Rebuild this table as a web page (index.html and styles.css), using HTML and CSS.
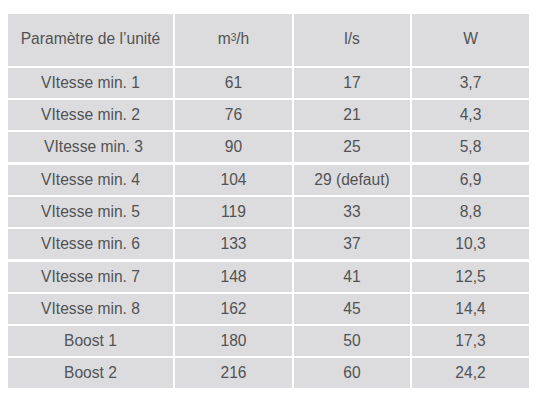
FILE: index.html
```html
<!DOCTYPE html>
<html lang="fr">
<head>
<meta charset="utf-8">
<title>Paramètre de l'unité</title>
<link rel="stylesheet" href="styles.css">
</head>
<body>
<div class="page">
  <div class="grid">
    <div class="cell head">Paramètre de l’unité</div>
    <div class="cell head">m<sup>3</sup>/h</div>
    <div class="cell head">l/s</div>
    <div class="cell head">W</div>

    <div class="cell">VItesse min. 1</div><div class="cell">61</div><div class="cell">17</div><div class="cell">3,7</div>
    <div class="cell">VItesse min. 2</div><div class="cell">76</div><div class="cell">21</div><div class="cell">4,3</div>
    <div class="cell shifted">VItesse min. 3</div><div class="cell">90</div><div class="cell">25</div><div class="cell">5,8</div>
    <div class="cell">VItesse min. 4</div><div class="cell">104</div><div class="cell">29 (defaut)</div><div class="cell">6,9</div>
    <div class="cell">VItesse min. 5</div><div class="cell">119</div><div class="cell">33</div><div class="cell">8,8</div>
    <div class="cell">VItesse min. 6</div><div class="cell">133</div><div class="cell">37</div><div class="cell">10,3</div>
    <div class="cell">VItesse min. 7</div><div class="cell">148</div><div class="cell">41</div><div class="cell">12,5</div>
    <div class="cell">VItesse min. 8</div><div class="cell">162</div><div class="cell">45</div><div class="cell">14,4</div>
    <div class="cell">Boost 1</div><div class="cell">180</div><div class="cell">50</div><div class="cell">17,3</div>
    <div class="cell">Boost 2</div><div class="cell">216</div><div class="cell">60</div><div class="cell">24,2</div>
  </div>
</div>
</body>
</html>
```

FILE: styles.css
```css
html, body {
  margin: 0;
  padding: 0;
  background: #ffffff;
}

.page {
  padding: 14px 0 0 8px;
}

.grid {
  display: grid;
  grid-template-columns: 165px 117px 116px 117px;
  grid-template-rows: 51.5px;
  grid-auto-rows: 30px;
  column-gap: 2px;
  row-gap: 2.3px;
  font-family: "Liberation Sans", Arial, sans-serif;
  font-size: 15.6px;
  color: #525254;
}

.cell {
  background: #dcdcde;
  display: flex;
  align-items: center;
  justify-content: center;
  white-space: nowrap;
}

.head {
  padding-bottom: 2px;
}

.head sup {
  font-size: 10px;
  line-height: 0;
  position: relative;
  top: -1px;
}

.shifted {
  padding-left: 6px;
}
```
